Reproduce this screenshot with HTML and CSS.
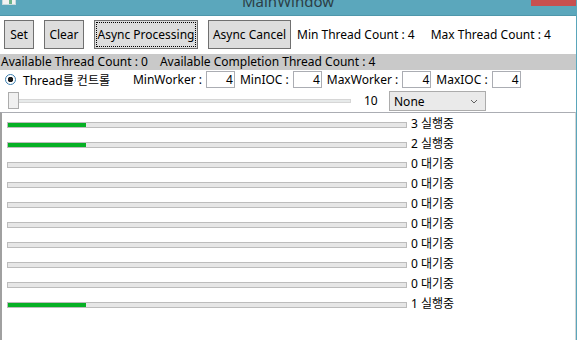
FILE: index.html
```html
<!DOCTYPE html>
<html lang="ko">
    <head>
        <meta charset="UTF-8" />
        <title>MainWindow</title>
        <link rel="stylesheet" href="styles.css">
    </head>
    <body>
        <div class="window">
            <div class="title_bar">
                <div class="app_icon"></div>
                <span class="title_text">MainWindow</span>
                <div class="close_btn"></div>
            </div>

            <div class="button_row">
                <button class="btn btn_set">Set</button>
                <button class="btn btn_clear">Clear</button>
                <button class="btn btn_async focused">Async Processing</button>
                <button class="btn btn_cancel">Async Cancel</button>
                <span class="thread_count">Min Thread Count : 4</span>
                <span class="thread_count">Max Thread Count : 4</span>
            </div>

            <div class="info_bar">
                <span>Available Thread Count : 0</span>
                <span>Available Completion Thread Count : 4</span>
            </div>

            <div class="option_row">
                <label class="radio">
                    <span class="radio_dot"></span>
                    Thread를 컨트롤
                </label>
                <span class="field_label first">MinWorker :</span>
                <span class="num_box">4</span>
                <span class="field_label">MinIOC :</span>
                <span class="num_box">4</span>
                <span class="field_label">MaxWorker :</span>
                <span class="num_box">4</span>
                <span class="field_label">MaxIOC :</span>
                <span class="num_box">4</span>
            </div>

            <div class="slider_row">
                <div class="slider">
                    <div class="slider_track"></div>
                    <div class="slider_thumb"></div>
                </div>
                <span class="slider_value">10</span>
                <div class="combo">
                    <span>None</span>
                    <svg width="8" height="5" viewBox="0 0 8 5">
                        <path d="M1 1 L4 4 L7 1" fill="none" stroke="#606060" stroke-width="1" />
                    </svg>
                </div>
            </div>

            <div class="task_list">
                <div class="task"><div class="bar"><div class="fill" style="width: 78px"></div></div><span class="task_label">3 실행중</span></div>
                <div class="task"><div class="bar"><div class="fill" style="width: 78px"></div></div><span class="task_label">2 실행중</span></div>
                <div class="task"><div class="bar"></div><span class="task_label">0 대기중</span></div>
                <div class="task"><div class="bar"></div><span class="task_label">0 대기중</span></div>
                <div class="task"><div class="bar"></div><span class="task_label">0 대기중</span></div>
                <div class="task"><div class="bar"></div><span class="task_label">0 대기중</span></div>
                <div class="task"><div class="bar"></div><span class="task_label">0 대기중</span></div>
                <div class="task"><div class="bar"></div><span class="task_label">0 대기중</span></div>
                <div class="task"><div class="bar"></div><span class="task_label">0 대기중</span></div>
                <div class="task"><div class="bar"><div class="fill" style="width: 78px"></div></div><span class="task_label">1 실행중</span></div>
            </div>
        </div>
    </body>
</html>
```

FILE: styles.css
```css
body {
    margin: 0;
    width: 577px;
    height: 340px;
    overflow: hidden;
    font-family: "Noto Sans", "Noto Sans CJK KR", sans-serif;
    font-size: 12px;
    color: #000;
    background-color: #ffffff;
}

.window {
    height: 340px;
    display: flex;
    flex-direction: column;
    border-right: 1px solid #5aa6bb;
    box-sizing: border-box;
}

.title_bar {
    position: relative;
    height: 15px;
    flex: none;
    background-color: #5ba7bc;
    border-bottom: 1px solid #4e97ab;
    overflow: hidden;
    display: flex;
    justify-content: center;
}

.title_text {
    font-size: 15px;
    line-height: 15px;
    margin-top: -6px;
    color: #2c3e45;
}

.app_icon {
    position: absolute;
    left: 2px;
    top: -10px;
    width: 14px;
    height: 15px;
    background: linear-gradient(90deg, #f2f2f2 0 6px, #6db38a 6px 9px, #f2f2f2 9px);
    border: 1px solid #c8d8dc;
    box-sizing: border-box;
}

.close_btn {
    position: absolute;
    right: 0;
    top: 0;
    width: 45px;
    height: 6px;
    background-color: #c75050;
}

.button_row {
    display: flex;
    align-items: center;
    padding: 4px 0 0 4px;
    height: 29px;
    flex: none;
}

.btn {
    height: 29px;
    font-family: inherit;
    font-size: 12px;
    background-color: #dddddd;
    border: 1px solid #707070;
    padding: 0;
    margin-right: 10px;
    color: #000;
}

.btn_set {
    width: 30px;
}

.btn_clear {
    width: 40px;
}

.btn_async {
    width: 104px;
}

.btn_cancel {
    width: 83px;
    margin-right: 6px;
}

.focused {
    outline: 1px dotted #000;
    outline-offset: -3px;
}

.thread_count {
    margin-right: 16px;
}

.info_bar {
    margin-top: 5px;
    height: 16px;
    flex: none;
    background-color: #c9c9c9;
    line-height: 16px;
    padding-left: 1px;
    display: flex;
    gap: 12px;
}

.option_row {
    height: 17px;
    flex: none;
    display: flex;
    align-items: center;
    margin-top: 1px;
}

.radio {
    display: flex;
    align-items: center;
    padding-left: 5px;
    gap: 7px;
}

.radio_dot {
    width: 9px;
    height: 9px;
    border: 1px solid #3c7fb1;
    border-radius: 50%;
    background: radial-gradient(circle, #1a1a1a 0 2.5px, #ffffff 3px);
}

.field_label {
    margin-left: 5px;
    margin-right: 4px;
}

.field_label.first {
    margin-left: 23px;
}

.num_box {
    width: 26px;
    height: 15px;
    line-height: 15px;
    border: 1px solid #abadb3;
    box-sizing: content-box;
    text-align: right;
    padding-right: 1px;
}

.slider_row {
    height: 22px;
    flex: none;
    display: flex;
    align-items: center;
    margin-top: 1px;
}

.slider {
    position: relative;
    width: 343px;
    height: 17px;
    margin-left: 8px;
}

.slider_track {
    position: absolute;
    left: 4px;
    right: 0;
    top: 7px;
    height: 2px;
    background-color: #e7eaea;
    border: 1px solid #d6d6d6;
}

.slider_thumb {
    position: absolute;
    left: 0;
    top: 0;
    width: 9px;
    height: 15px;
    background-color: #f0f0f0;
    border: 1px solid #acacac;
}

.slider_value {
    margin-left: 13px;
    width: 25px;
}

.combo {
    width: 97px;
    height: 20px;
    border: 1px solid #acacac;
    background-color: #eaeaea;
    display: flex;
    align-items: center;
    justify-content: space-between;
    padding: 0 7px 0 4px;
    box-sizing: border-box;
    margin-top: 2px;
}

.task_list {
    flex: 1;
    margin-top: 1px;
    border-top: 1px solid #abadb3;
    border-left: 2px solid #a0a0a0;
    border-right: 1px solid #d4d4d4;
    padding-top: 8px;
    padding-left: 5px;
}

.task {
    height: 20px;
    display: flex;
    align-items: flex-start;
}

.bar {
    width: 398px;
    height: 4px;
    margin-top: 1px;
    border: 1px solid #bcbcbc;
    background-color: #e6e6e6;
}

.fill {
    height: 100%;
    background-color: #06b025;
}

.task_label {
    margin-left: 4px;
    margin-top: -6px;
    line-height: 17px;
}
```
